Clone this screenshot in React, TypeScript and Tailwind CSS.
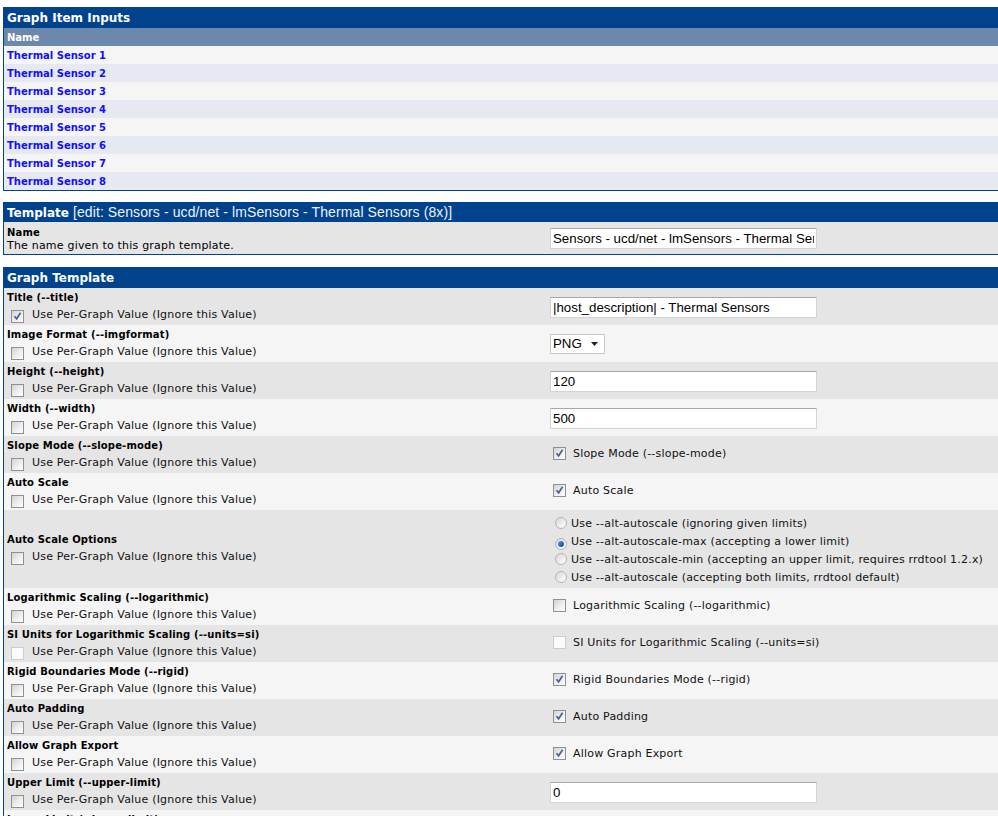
import type { ReactNode } from "react";

type TemplateRow = {
  title: string;
  checked?: boolean;
  disabled?: boolean;
  tall?: boolean;
  right: ReactNode;
};

const verdana = "font-['DejaVu_Sans',Verdana,sans-serif]";
const arial = "font-['Liberation_Sans',Arial,sans-serif]";

function Check({ checked, disabled }: { checked?: boolean; disabled?: boolean }) {
  return (
    <span
      className={`relative inline-block h-[13px] w-[13px] shrink-0 border ${
        disabled
          ? "border-[#cdcdcd] bg-[#fbfbfb]"
          : "border-[#8f9091] bg-linear-to-br from-[#d2d2d2] via-[#ececec] to-white"
      }`}
    >
      {checked ? (
        <svg viewBox="0 0 11 11" className="absolute inset-0 h-[11px] w-[11px]">
          <path d="M2.5 5.2 L4.6 7.8 L8.6 1.8" fill="none" stroke="#4b5f95" strokeWidth="1.7" />
        </svg>
      ) : null}
    </span>
  );
}

function Radio({ checked }: { checked?: boolean }) {
  return (
    <span className="relative inline-flex h-[12px] w-[12px] shrink-0 items-center justify-center rounded-full border border-[#b4b4b4] bg-linear-to-br from-[#d8d8d8] to-white">
      {checked ? (
        <span className="h-[6px] w-[6px] rounded-full bg-linear-to-br from-[#5a9be6] to-[#0e3f95]" />
      ) : null}
    </span>
  );
}

function TextBox({ value }: { value: string }) {
  return (
    <input
      readOnly
      value={value}
      className={`h-[21px] w-[267px] border border-[#d4d4d4] border-t-[#a8a8a8] bg-white px-[2px] text-[13.3px] text-black outline-none ${arial}`}
    />
  );
}

function RightCheck({ checked, disabled, label }: { checked?: boolean; disabled?: boolean; label: string }) {
  return (
    <div className="flex items-start">
      <span className="ml-[3px]">
        <Check checked={checked} disabled={disabled} />
      </span>
      <span className="ml-[7px] mt-[4px] text-[11px] leading-[13px] tracking-[0.2px] text-[#111]">{label}</span>
    </div>
  );
}

const radioOptions = [
  { label: "Use --alt-autoscale (ignoring given limits)", checked: false },
  { label: "Use --alt-autoscale-max (accepting a lower limit)", checked: true },
  { label: "Use --alt-autoscale-min (accepting an upper limit, requires rrdtool 1.2.x)", checked: false },
  { label: "Use --alt-autoscale (accepting both limits, rrdtool default)", checked: false },
];

const rows: TemplateRow[] = [
  { title: "Title (--title)", checked: true, right: <TextBox value="|host_description| - Thermal Sensors" /> },
  {
    title: "Image Format (--imgformat)",
    right: (
      <div className={`flex h-[20px] w-[55px] items-center border border-[#c9c9c9] bg-white pl-[2px] text-[13.3px] text-black ${arial}`}>
        PNG
        <svg viewBox="0 0 7 4" className="ml-[9px] h-[4px] w-[7px]">
          <path d="M0 0 H7 L3.5 4 Z" fill="#222" />
        </svg>
      </div>
    ),
  },
  { title: "Height (--height)", right: <TextBox value="120" /> },
  { title: "Width (--width)", right: <TextBox value="500" /> },
  { title: "Slope Mode (--slope-mode)", right: <RightCheck checked label="Slope Mode (--slope-mode)" /> },
  { title: "Auto Scale", right: <RightCheck checked label="Auto Scale" /> },
  {
    title: "Auto Scale Options",
    tall: true,
    right: (
      <div className="mt-[3px] flex flex-col">
        {radioOptions.map((option) => (
          <div key={option.label} className="flex h-[18px] items-center">
            <span className="ml-[5px]">
              <Radio checked={option.checked} />
            </span>
            <span className="ml-[4px] text-[11px] leading-[13px] tracking-[0.2px] text-[#111]">{option.label}</span>
          </div>
        ))}
      </div>
    ),
  },
  {
    title: "Logarithmic Scaling (--logarithmic)",
    right: <RightCheck label="Logarithmic Scaling (--logarithmic)" />,
  },
  {
    title: "SI Units for Logarithmic Scaling (--units=si)",
    disabled: true,
    right: <RightCheck disabled label="SI Units for Logarithmic Scaling (--units=si)" />,
  },
  { title: "Rigid Boundaries Mode (--rigid)", right: <RightCheck checked label="Rigid Boundaries Mode (--rigid)" /> },
  { title: "Auto Padding", right: <RightCheck checked label="Auto Padding" /> },
  { title: "Allow Graph Export", right: <RightCheck checked label="Allow Graph Export" /> },
  { title: "Upper Limit (--upper-limit)", right: <TextBox value="0" /> },
  { title: "Lower Limit (--lower-limit)", right: <TextBox value="0" /> },
];

const sensors = [1, 2, 3, 4, 5, 6, 7, 8];

export default function App() {
  return (
    <div className={`h-[816px] w-[998px] overflow-hidden bg-white pl-[3px] pt-[7px] text-black ${verdana}`}>
      {/* graph item inputs */}
      <div className="w-[1000px] border border-[#00438c]">
        <div className="flex h-[20px] items-center bg-[#00438c] pl-[3px] text-[12px] font-bold text-white">
          Graph Item Inputs
        </div>
        <div className="flex h-[18px] items-center bg-[#6d88ad] pl-[3px] text-[10px] font-bold text-white">Name</div>
        {sensors.map((n) => (
          <div
            key={n}
            className={`flex h-[18px] items-center pl-[3px] text-[10px] font-bold text-[#1010ff] ${
              n % 2 === 1 ? "bg-[#f5f5f5]" : "bg-[#e7e9f2]"
            }`}
          >
            Thermal Sensor {n}
          </div>
        ))}
      </div>

      {/* template */}
      <div className="mt-[11px] w-[1000px] border border-[#00438c]">
        <div className="flex h-[19px] items-center bg-[#00438c] pl-[3px] text-white">
          <span className="text-[12px] font-bold">Template</span>
          <span className={`ml-[4px] text-[14px] tracking-[0.1px] text-[#eef2f8] ${arial}`}>
            [edit: Sensors - ucd/net - lmSensors - Thermal Sensors (8x)]
          </span>
        </div>
        <div className="flex h-[32px] items-center bg-[#e5e5e5]">
          <div className="flex w-[543px] flex-col pl-[3px] pt-[1px] leading-[13px]">
            <span className="text-[10px] font-bold tracking-[0.15px]">Name</span>
            <span className="text-[11px] tracking-[0.2px]">The name given to this graph template.</span>
          </div>
          <div className="pl-[3px]">
            <TextBox value="Sensors - ucd/net - lmSensors - Thermal Sensors (8x)" />
          </div>
        </div>
      </div>

      {/* graph template */}
      <div className="mt-[12px] w-[1000px] border border-[#00438c]">
        <div className="flex h-[20px] items-center bg-[#00438c] pl-[3px] text-[12px] font-bold text-white">
          Graph Template
        </div>
        {rows.map((row, index) => (
          <div
            key={row.title}
            className={`flex items-center ${row.tall ? "h-[78px]" : "h-[37px]"} ${
              index % 2 === 0 ? "bg-[#e5e5e5]" : "bg-[#f5f5f5]"
            }`}
          >
            <div className="flex w-[543px] flex-col pl-[3px]">
              <span className="text-[10px] font-bold leading-[14px] tracking-[0.15px]">{row.title}</span>
              <div className="flex h-[18px] items-start">
                <span className="ml-[4px] mt-px">
                  <Check checked={row.checked} disabled={row.disabled} />
                </span>
                <span className="ml-[8px] mt-[3px] text-[11px] leading-[13px] tracking-[0.2px] text-[#111]">
                  Use Per-Graph Value (Ignore this Value)
                </span>
              </div>
            </div>
            <div className="pl-[3px]">{row.right}</div>
          </div>
        ))}
      </div>
    </div>
  );
}
